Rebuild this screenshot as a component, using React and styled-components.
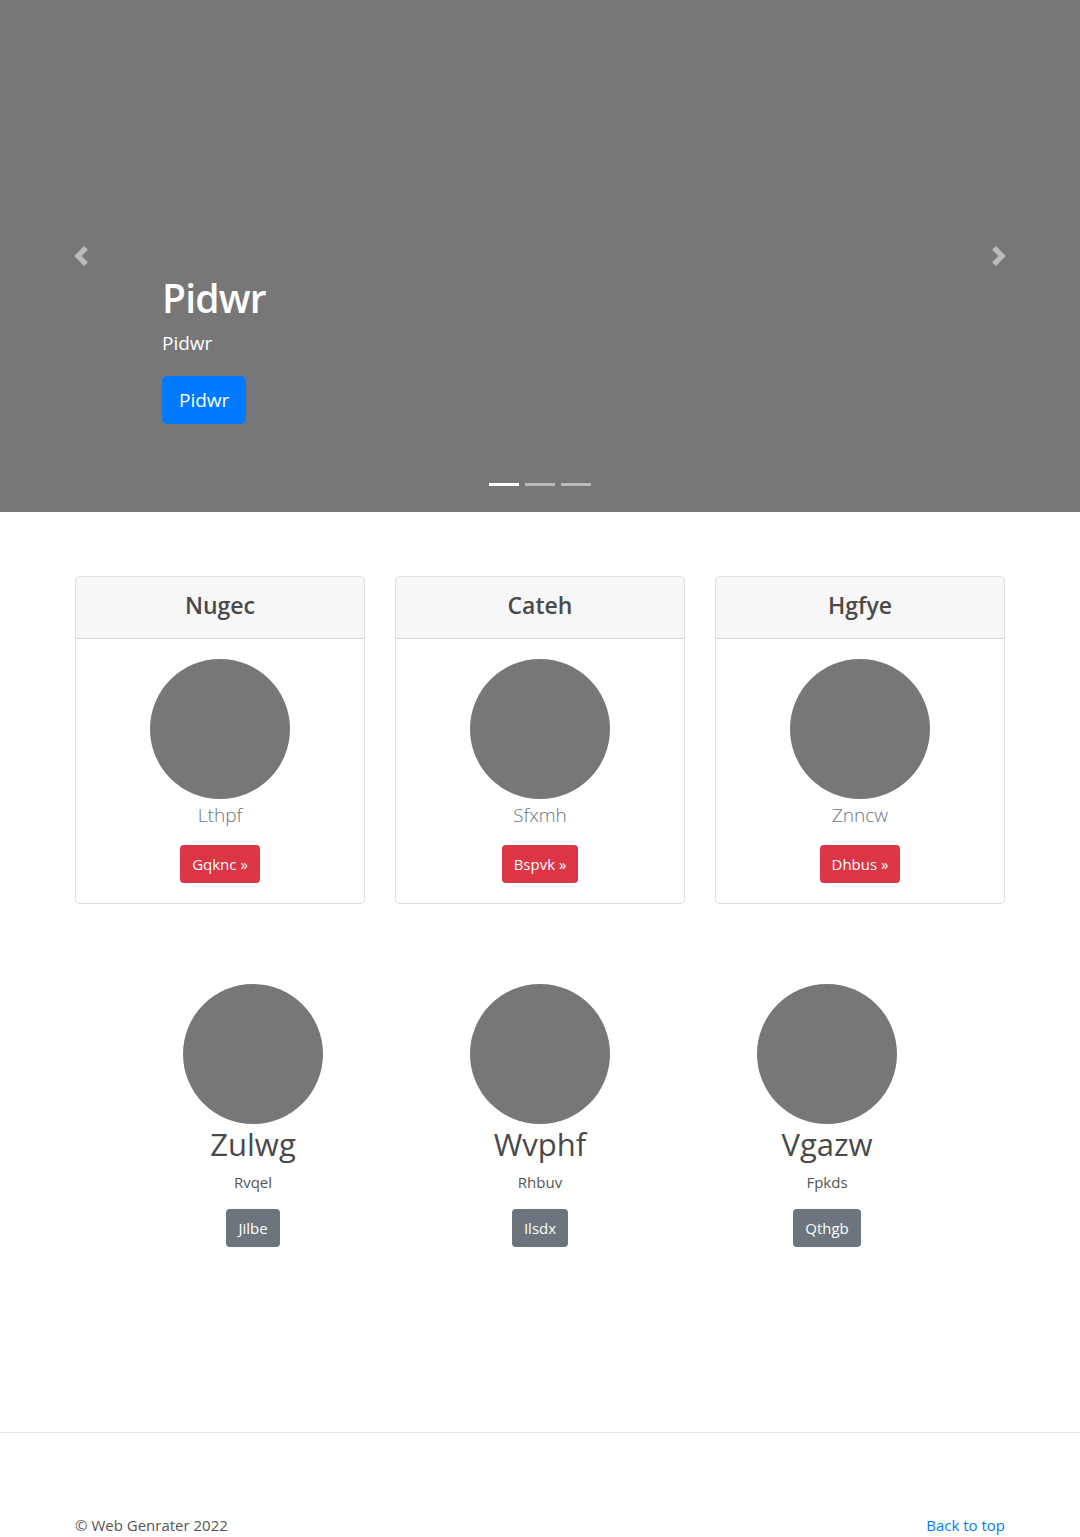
import React from 'react';
import styled, { createGlobalStyle } from 'styled-components';

const GlobalStyle = createGlobalStyle`
  * { box-sizing: border-box; }
  body {
    margin: 0;
    font-family: "Open Sans", "Noto Sans", Arial, sans-serif;
    font-size: 16px;
    line-height: 1.5;
    color: #555;
    background: #fff;
  }
`;

const Hero = styled.section`
  position: relative;
  height: 512px;
  background: #777;
  display: flex;
  flex-direction: column;
  justify-content: flex-end;
  padding: 0 15% 88px;
`;

const Caption = styled.div`
  color: #fff;
  text-align: left;
`;

const HeroTitle = styled.h1`
  margin: 0 0 6px;
  font-size: 39px;
  font-weight: 600;
  line-height: 1.2;
  letter-spacing: -0.8px;
`;

const HeroText = styled.p`
  margin: 0 0 18px;
  font-size: 19px;
  line-height: 30px;
`;

const Button = styled.a`
  display: inline-block;
  text-decoration: none;
  color: #fff;
  border-radius: ${p => (p.$lg ? '5px' : '4px')};
  font-size: ${p => (p.$lg ? '19px' : '15px')};
  line-height: ${p => (p.$lg ? '48px' : '38px')};
  padding: ${p => (p.$lg ? '0 17px' : '0 12px')};
  background: ${p => p.$bg};
  cursor: pointer;
`;

const Control = styled.div`
  position: absolute;
  top: 0;
  bottom: 0;
  ${p => (p.$side === 'left' ? 'left: 0;' : 'right: 0;')}
  width: 15%;
  display: flex;
  align-items: center;
  justify-content: center;
  opacity: 0.5;
`;

const Indicators = styled.ol`
  position: absolute;
  left: 0;
  right: 0;
  bottom: 26px;
  margin: 0;
  padding: 0;
  list-style: none;
  display: flex;
  justify-content: center;
  gap: 6px;
`;

const Indicator = styled.li`
  width: 30px;
  height: 3px;
  background: #fff;
  opacity: ${p => (p.$active ? 1 : 0.5)};
`;

const Container = styled.div`
  width: 930px;
  margin: 0 auto;
`;

const CardDeck = styled.div`
  display: grid;
  grid-template-columns: repeat(3, 1fr);
  gap: 30px;
  margin-top: 64px;
`;

const Card = styled.div`
  border: 1px solid rgba(0, 0, 0, 0.125);
  border-radius: 4px;
  text-align: center;
  overflow: hidden;
`;

const CardHeader = styled.div`
  height: 62px;
  padding-bottom: 5px;
  background: #f7f7f7;
  border-bottom: 1px solid rgba(0, 0, 0, 0.125);
  display: flex;
  align-items: center;
  justify-content: center;
`;

const CardTitle = styled.h4`
  margin: 0;
  font-size: 23px;
  font-weight: 600;
  color: #4a4a4a;
`;

const CardBody = styled.div`
  padding: 20px;
  display: flex;
  flex-direction: column;
  align-items: center;
`;

const Circle = styled.div`
  width: 140px;
  height: 140px;
  border-radius: 50%;
  background: #777;
`;

const Lead = styled.p`
  margin: 1px 0 15px;
  font-size: 19px;
  font-weight: 300;
  line-height: 30px;
  color: #6c757d;
`;

const Marketing = styled.div`
  width: 861px;
  margin: 80px auto 0;
  display: grid;
  grid-template-columns: repeat(3, 1fr);
`;

const Feature = styled.div`
  display: flex;
  flex-direction: column;
  align-items: center;
`;

const FeatureTitle = styled.h2`
  margin: 1px 0 7px;
  font-size: 31px;
  font-weight: 400;
  line-height: 38px;
  color: #4a4a4a;
`;

const FeatureText = styled.p`
  margin: 0 0 15px;
  font-size: 15px;
  line-height: 24px;
  color: #555;
`;

const Footer = styled.footer`
  margin-top: 185px;
  border-top: 1px solid #e5e5e5;
  padding-top: 81px;
`;

const FooterRow = styled.div`
  display: flex;
  justify-content: space-between;
  align-items: center;
  font-size: 15px;
  color: #555;
`;

const TopLink = styled.a`
  color: #007bff;
  text-decoration: none;
`;

const Chevron = ({ dir }) => (
  <svg width="20" height="20" viewBox="0 0 8 8" fill="#fff">
    {dir === 'left' ? (
      <path d="M5.25 0l-4 4 4 4 1.5-1.5L4.25 4l2.5-2.5L5.25 0z" />
    ) : (
      <path d="M2.75 0l-1.5 1.5L3.75 4l-2.5 2.5L2.75 8l4-4-4-4z" />
    )}
  </svg>
);

const cards = [
  { title: 'Nugec', text: 'Lthpf', btn: 'Gqknc' },
  { title: 'Cateh', text: 'Sfxmh', btn: 'Bspvk' },
  { title: 'Hgfye', text: 'Znncw', btn: 'Dhbus' },
];

const features = [
  { title: 'Zulwg', text: 'Rvqel', btn: 'Jilbe' },
  { title: 'Wvphf', text: 'Rhbuv', btn: 'Ilsdx' },
  { title: 'Vgazw', text: 'Fpkds', btn: 'Qthgb' },
];

export default function App() {
  return (
    <>
      <GlobalStyle />
      <Hero>
        <Control $side="left"><Chevron dir="left" /></Control>
        <Caption>
          <HeroTitle>Pidwr</HeroTitle>
          <HeroText>Pidwr</HeroText>
          <Button $lg $bg="#007bff">Pidwr</Button>
        </Caption>
        <Control $side="right"><Chevron dir="right" /></Control>
        <Indicators>
          <Indicator $active />
          <Indicator />
          <Indicator />
        </Indicators>
      </Hero>

      <Container>
        <CardDeck>
          {cards.map(c => (
            <Card key={c.title}>
              <CardHeader>
                <CardTitle>{c.title}</CardTitle>
              </CardHeader>
              <CardBody>
                <Circle />
                <Lead>{c.text}</Lead>
                <Button $bg="#dc3545">{c.btn} »</Button>
              </CardBody>
            </Card>
          ))}
        </CardDeck>
      </Container>

      <Marketing>
        {features.map(f => (
          <Feature key={f.title}>
            <Circle />
            <FeatureTitle>{f.title}</FeatureTitle>
            <FeatureText>{f.text}</FeatureText>
            <Button $bg="#6c757d">{f.btn}</Button>
          </Feature>
        ))}
      </Marketing>

      <Footer>
        <Container>
          <FooterRow>
            <span>© Web Genrater 2022</span>
            <TopLink href="#">Back to top</TopLink>
          </FooterRow>
        </Container>
      </Footer>
    </>
  );
}
